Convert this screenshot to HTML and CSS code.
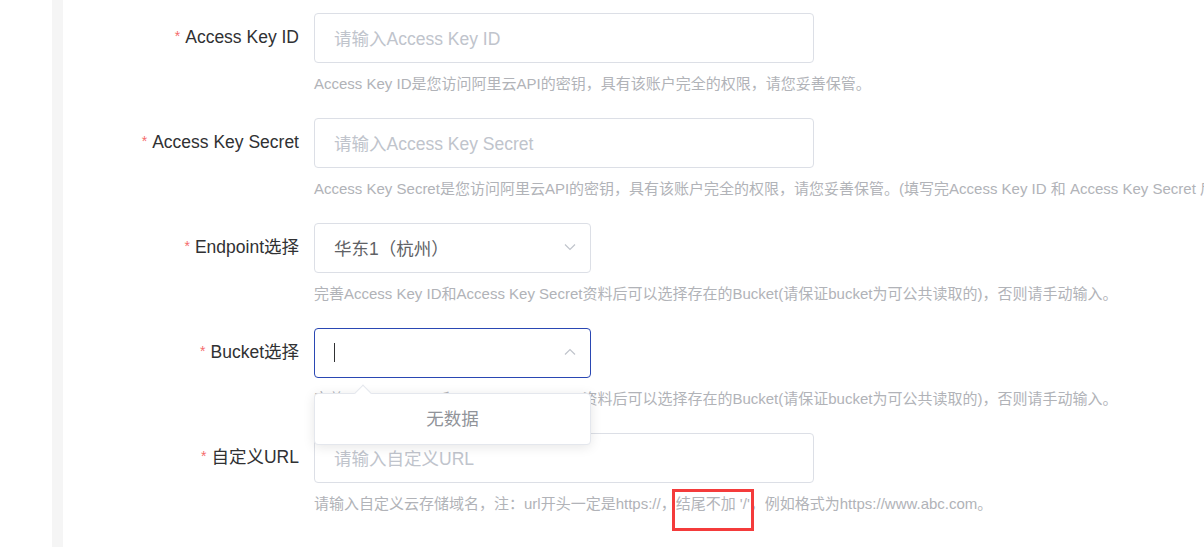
FILE: index.html
```html
<!DOCTYPE html>
<html lang="zh-CN">
<head>
    <meta charset="UTF-8">
    <meta name="viewport" content="width=device-width, initial-scale=1.0">
    <title>阿里云OSS设置</title>
    <link rel="stylesheet" href="styles.css">
</head>
<body>
    <div class="layout">
        <div class="side"></div>
        <div class="gutter"></div>
        <div class="main">
            <form class="form">
                <div class="form-item">
                    <label class="form-label"><span class="req">*</span>Access Key ID</label>
                    <div class="form-content">
                        <div class="input wide"><span class="placeholder">请输入Access Key ID</span></div>
                        <p class="hint">Access Key ID是您访问阿里云API的密钥，具有该账户完全的权限，请您妥善保管。</p>
                    </div>
                </div>

                <div class="form-item">
                    <label class="form-label"><span class="req">*</span>Access Key Secret</label>
                    <div class="form-content">
                        <div class="input wide"><span class="placeholder">请输入Access Key Secret</span></div>
                        <p class="hint">Access Key Secret是您访问阿里云API的密钥，具有该账户完全的权限，请您妥善保管。(填写完Access Key ID 和 Access Key Secret 后</p>
                    </div>
                </div>

                <div class="form-item">
                    <label class="form-label"><span class="req">*</span>Endpoint选择</label>
                    <div class="form-content">
                        <div class="input select">
                            <span class="value">华东1（杭州）</span>
                            <svg class="arrow" viewBox="0 0 12 12" width="12" height="12"><path d="M1 3.5 L6 8.5 L11 3.5" fill="none" stroke="#c0c4cc" stroke-width="1.2"/></svg>
                        </div>
                        <p class="hint">完善Access Key ID和Access Key Secret资料后可以选择存在的Bucket(请保证bucket为可公共读取的)，否则请手动输入。</p>
                    </div>
                </div>

                <div class="form-item">
                    <label class="form-label"><span class="req">*</span>Bucket选择</label>
                    <div class="form-content">
                        <div class="select-wrap">
                            <div class="input select focused">
                                <span class="caret"></span>
                                <svg class="arrow" viewBox="0 0 12 12" width="12" height="12"><path d="M1 8.5 L6 3.5 L11 8.5" fill="none" stroke="#c0c4cc" stroke-width="1.2"/></svg>
                            </div>
                            <div class="dropdown">
                                <span class="dropdown-arrow"></span>
                                <p class="empty">无数据</p>
                            </div>
                        </div>
                        <p class="hint">完善Access Key ID和Access Key Secret资料后可以选择存在的Bucket(请保证bucket为可公共读取的)，否则请手动输入。</p>
                    </div>
                </div>

                <div class="form-item">
                    <label class="form-label"><span class="req">*</span>自定义URL</label>
                    <div class="form-content">
                        <div class="input wide"><span class="placeholder">请输入自定义URL</span></div>
                        <p class="hint">请输入自定义云存储域名，注：url开头一定是https://，<span class="mark">结尾不加 '/</span>'，例如格式为https://www.abc.com。</p>
                    </div>
                </div>
            </form>
        </div>
    </div>
</body>
</html>
```

FILE: styles.css
```css
* {
    margin: 0;
    padding: 0;
    box-sizing: border-box;
}

body {
    font-family: "Liberation Sans", Arial, "Noto Sans CJK SC", sans-serif;
    background: #ffffff;
    color: #303133;
    overflow: hidden;
    height: 547px;
}

.layout {
    display: flex;
    height: 100%;
}

.side {
    width: 52px;
    background: #ffffff;
    flex-shrink: 0;
}

.gutter {
    width: 11px;
    background: #f5f5f5;
    flex-shrink: 0;
}

.main {
    flex: 1;
    min-width: 0;
    padding-top: 13px;
}

.form-item {
    display: flex;
    margin-bottom: 24px;
}

.form-label {
    width: 251px;
    flex-shrink: 0;
    padding-right: 15px;
    text-align: right;
    font-size: 17.5px;
    line-height: 47px;
    color: #303133;
    white-space: nowrap;
}

.req {
    color: #f56c6c;
    font-size: 14px;
    margin-right: 5px;
    vertical-align: 2px;
}

.form-content {
    flex: 1;
    min-width: 0;
}

.input {
    height: 50px;
    border: 1px solid #dcdfe6;
    border-radius: 4px;
    background: #ffffff;
    padding: 0 19px 2px;
    display: flex;
    align-items: center;
    font-size: 17.5px;
}

.input.wide {
    width: 500px;
}

.input.select {
    width: 277px;
    justify-content: space-between;
}

.input.focused {
    border-color: #2a47b3;
}

.placeholder {
    color: #c0c4cc;
}

.value {
    color: #606266;
}

.caret {
    width: 1px;
    height: 19px;
    background: #303133;
}

.arrow {
    margin-right: -5px;
}

.hint {
    margin-top: 11px;
    font-size: 15px;
    line-height: 20px;
    color: #b1b3b8;
    white-space: nowrap;
}

.mark {
    position: relative;
}

.mark::after {
    content: "";
    position: absolute;
    left: -4px;
    top: -6px;
    width: 82px;
    height: 42px;
    box-sizing: border-box;
    border: 3px solid #f43b3b;
}

.select-wrap {
    position: relative;
    width: 277px;
}

.dropdown {
    position: absolute;
    left: 0;
    top: 65px;
    width: 277px;
    height: 52px;
    background: #ffffff;
    border: 1px solid #e4e7ed;
    border-radius: 4px;
    box-shadow: 0 2px 12px rgba(0, 0, 0, 0.1);
    z-index: 10;
}

.dropdown-arrow {
    position: absolute;
    left: 42px;
    top: -7px;
    width: 12px;
    height: 12px;
    background: #ffffff;
    border-left: 1px solid #e4e7ed;
    border-top: 1px solid #e4e7ed;
    transform: rotate(45deg);
}

.empty {
    text-align: center;
    line-height: 50px;
    font-size: 17.5px;
    color: #909399;
}
```
